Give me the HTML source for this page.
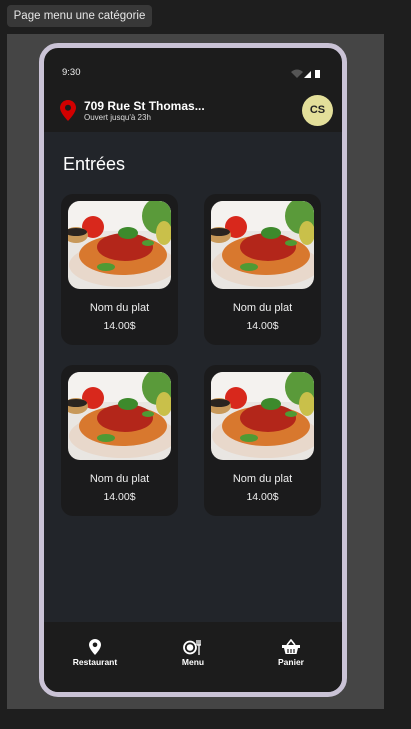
<html><head><style>
body{margin:0;width:411px;height:729px;background:#1e1e1e;position:relative;overflow:hidden;font-family:"Liberation Sans",sans-serif}
.tag{position:absolute;left:7px;top:5px;width:145px;height:22px;background:#383838;border-radius:4px;color:#e6e6e6;font-size:11.5px;line-height:22px;text-align:center}
.panel{position:absolute;left:7px;top:34px;width:377px;height:675px;background:#454545}
.phone{position:absolute;left:39px;top:43px;width:298px;height:644px;border:5px solid #cac3d6;border-radius:19px;background:#1c1c1c;overflow:hidden}
.content{position:absolute;left:0;top:84px;width:298px;height:490px;background:#22252a}
.nav{position:absolute;left:0;top:574px;width:298px;height:70px;background:#1c1c1c}
.card{position:absolute;width:117px;height:151px;background:#1b1b1c;border-radius:12px}
.img{position:absolute;left:7px;top:7px;width:103px;height:88px;border-radius:12px;overflow:hidden}
.n{position:absolute;top:108px;width:100%;text-align:center;color:#eee;font-size:11px}
.p{position:absolute;top:126px;width:100%;text-align:center;color:#eee;font-size:10.5px}
.nl{position:absolute;top:35px;color:#fff;font-size:8.5px;font-weight:bold;width:80px;text-align:center}
</style></head><body>
<div class="tag">Page menu une catégorie</div>
<div class="panel"></div>
<div class="phone">
<div style="position:absolute;left:18px;top:19px;color:#eee;font-size:9.5px">9:30</div>
<svg style="position:absolute;left:247px;top:21px" width="40" height="10"><path d="M0 3 Q6 -2 12 3 L6 9Z" fill="#555"/><path d="M13 9 L20 2 L20 9Z" fill="#fff"/><rect x="24" y="1" width="5" height="8" fill="#fff"/></svg>
<svg style="position:absolute;left:16px;top:52px" width="16" height="21" viewBox="0 0 16 21"><path d="M8 0C3.6 0 0 3.4 0 7.8 0 13 8 21 8 21S16 13 16 7.8C16 3.4 12.4 0 8 0Z" fill="#d10000"/><circle cx="8" cy="7.8" r="3" fill="#1c1c1c"/></svg>
<div style="position:absolute;left:40px;top:51px;color:#fff;font-size:12px;font-weight:bold">709 Rue St Thomas...</div>
<div style="position:absolute;left:40px;top:65px;color:#ddd;font-size:8px">Ouvert jusqu'à 23h</div>
<div style="position:absolute;left:258px;top:47px;width:31px;height:31px;border-radius:50%;background:#e3df9a;color:#222;font-weight:bold;font-size:11px;line-height:31px;text-align:center">CS</div>
<div class="content">
<div style="position:absolute;left:19px;top:22px;color:#fff;font-size:18px">Entrées</div>
</div>
<div class="nav">
<svg style="position:absolute;left:45px;top:17px" width="12" height="16" viewBox="0 0 12 16"><path d="M6 0C2.7 0 0 2.6 0 5.8 0 10 6 16 6 16S12 10 12 5.8C12 2.6 9.3 0 6 0Z" fill="#fff"/><circle cx="6" cy="5.8" r="2.3" fill="#1c1c1c"/></svg>
<div class="nl" style="left:11px">Restaurant</div>
<svg style="position:absolute;left:139px;top:18px" width="18" height="15"><circle cx="7" cy="7.5" r="6" fill="none" stroke="#fff" stroke-width="1.8"/><circle cx="7" cy="7.5" r="3.3" fill="#fff"/><path d="M14 0v5M16 0v5M18 0v5M14 5h4M16 5v10" stroke="#fff" stroke-width="1.3"/></svg>
<div class="nl" style="left:109px">Menu</div>
<svg style="position:absolute;left:238px;top:17px" width="18" height="16"><path d="M5 6L9 1 13 6" fill="none" stroke="#fff" stroke-width="1.6"/><rect x="0" y="6" width="18" height="3" fill="#fff"/><path d="M2 9h14l-1.5 6h-11Z" fill="#fff"/><path d="M6 10v4M9 10v4M12 10v4" stroke="#1c1c1c" stroke-width="1.2"/></svg>
<div class="nl" style="left:207px">Panier</div>
</div>
</div>
<svg width="0" height="0" style="position:absolute"><defs>
<symbol id="f" viewBox="0 0 103 88">
<rect width="103" height="88" fill="#e9e6e2"/>
<rect width="103" height="30" fill="#f4f2ef"/>
<ellipse cx="90" cy="15" rx="16" ry="18" fill="#5a9a3a"/>
<ellipse cx="96" cy="32" rx="8" ry="12" fill="#c9c04a"/>
<circle cx="25" cy="26" r="11" fill="#d8281c"/>
<ellipse cx="8" cy="34" rx="12" ry="8" fill="#c8995a"/>
<ellipse cx="8" cy="31" rx="11" ry="4" fill="#2a2420"/>
<ellipse cx="55" cy="64" rx="54" ry="22" fill="#e8d8cb"/>
<ellipse cx="55" cy="54" rx="44" ry="20" fill="#d8782e"/>
<ellipse cx="57" cy="46" rx="28" ry="14" fill="#b3261a"/>
<ellipse cx="60" cy="32" rx="10" ry="6" fill="#3d8a2c"/>
<ellipse cx="38" cy="66" rx="9" ry="4" fill="#4f9a34"/>
<ellipse cx="80" cy="42" rx="6" ry="3" fill="#4f9a34"/>
</symbol></defs></svg>
<div class="card" style="left:61px;top:194px"><svg class="img"><use href="#f"/></svg><div class="n">Nom du plat</div><div class="p">14.00$</div></div>
<div class="card" style="left:204px;top:194px"><svg class="img"><use href="#f"/></svg><div class="n">Nom du plat</div><div class="p">14.00$</div></div>
<div class="card" style="left:61px;top:365px"><svg class="img"><use href="#f"/></svg><div class="n">Nom du plat</div><div class="p">14.00$</div></div>
<div class="card" style="left:204px;top:365px"><svg class="img"><use href="#f"/></svg><div class="n">Nom du plat</div><div class="p">14.00$</div></div>
</body></html>
